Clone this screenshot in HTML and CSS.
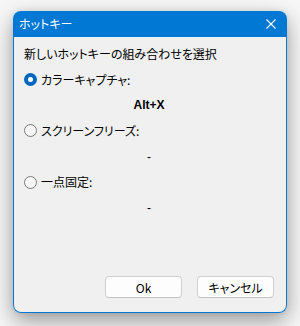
FILE: index.html
```html
<!DOCTYPE html>
<html lang="ja">
<head>
<meta charset="utf-8">
<link rel="stylesheet" href="styles.css">
</head>
<body>
<div class="window">
  <div class="titlebar">
    <span class="title">ホットキー</span>
    <svg class="close" width="10" height="10" viewBox="0 0 10 10"><path d="M0.5 0.5 L9.5 9.5 M9.5 0.5 L0.5 9.5" stroke="#fff" stroke-width="1.1" fill="none"/></svg>
  </div>
  <div class="client">
    <div class="rows">
      <div class="row">新しいホットキーの組み合わせを選択</div>
      <label class="row radio"><span class="dot checked"></span>カラーキャプチャ:</label>
      <div class="row key bold">Alt+X</div>
      <label class="row radio"><span class="dot"></span>スクリーンフリーズ:</label>
      <div class="row key">-</div>
      <label class="row radio"><span class="dot"></span>一点固定:</label>
      <div class="row key">-</div>
    </div>
    <div class="buttons">
      <button class="btn">Ok</button>
      <button class="btn">キャンセル</button>
    </div>
  </div>
</div>
</body>
</html>
```
FILE: styles.css
```css
html, body {
  margin: 0;
  padding: 0;
}
body {
  width: 300px;
  height: 326px;
  background: #f7f7f7;
  overflow: hidden;
  font-family: "Noto Sans CJK JP", "Liberation Sans", sans-serif;
  font-size: 12px;
  font-feature-settings: "palt";
  color: #000;
}
.window {
  margin: 11px 0 0 13px;
  width: 274px;
  height: 302px;
  border-radius: 8px;
  display: flex;
  flex-direction: column;
  box-shadow: 0 8px 22px rgba(0, 0, 0, 0.38), 0 0 6px rgba(0,0,0,0.08);
}
.titlebar {
  height: 26px;
  flex: none;
  background: #0078d4;
  border-radius: 8px 8px 0 0;
  display: flex;
  align-items: center;
  justify-content: space-between;
  padding: 0 11px 0 6px;
  color: #fff;
}
.title {
  font-size: 12px;
  line-height: 16px;
}
.close {
  display: block;
}
.client {
  flex: 1;
  background: #f0f0f0;
  border: 1px solid #0078d4;
  border-top: none;
  border-radius: 0 0 8px 8px;
  display: flex;
  flex-direction: column;
  padding: 9px 12px 14px 10px;
}
.rows {
  display: flex;
  flex-direction: column;
  gap: 9.67px;
}
.row {
  height: 16px;
  line-height: 16px;
  display: flex;
  align-items: center;
  white-space: nowrap;
}
.radio {
  gap: 4px;
}
.dot {
  width: 11px;
  height: 11px;
  border-radius: 50%;
  border: 1px solid #7a7a7a;
  background: #f6f6f6;
  flex: none;
  box-sizing: content-box;
}
.dot.checked {
  width: 5px;
  height: 5px;
  border: 4px solid #0067c0;
  background: #fff;
}
.key {
  justify-content: center;
  font-family: "Liberation Sans", "Noto Sans", sans-serif;
}
.bold {
  font-weight: bold;
}
.buttons {
  margin-top: auto;
  display: flex;
  justify-content: flex-end;
  gap: 15px;
}
.btn {
  width: 77px;
  height: 22px;
  margin: 0;
  padding: 0;
  background: #fdfdfd;
  border: 1px solid #d0d0d0;
  border-bottom-color: #c4c4c4;
  border-radius: 4px;
  font-family: "Noto Sans CJK JP", "Liberation Sans", sans-serif;
  font-size: 12px;
  font-feature-settings: "palt";
  color: #000;
}
```
